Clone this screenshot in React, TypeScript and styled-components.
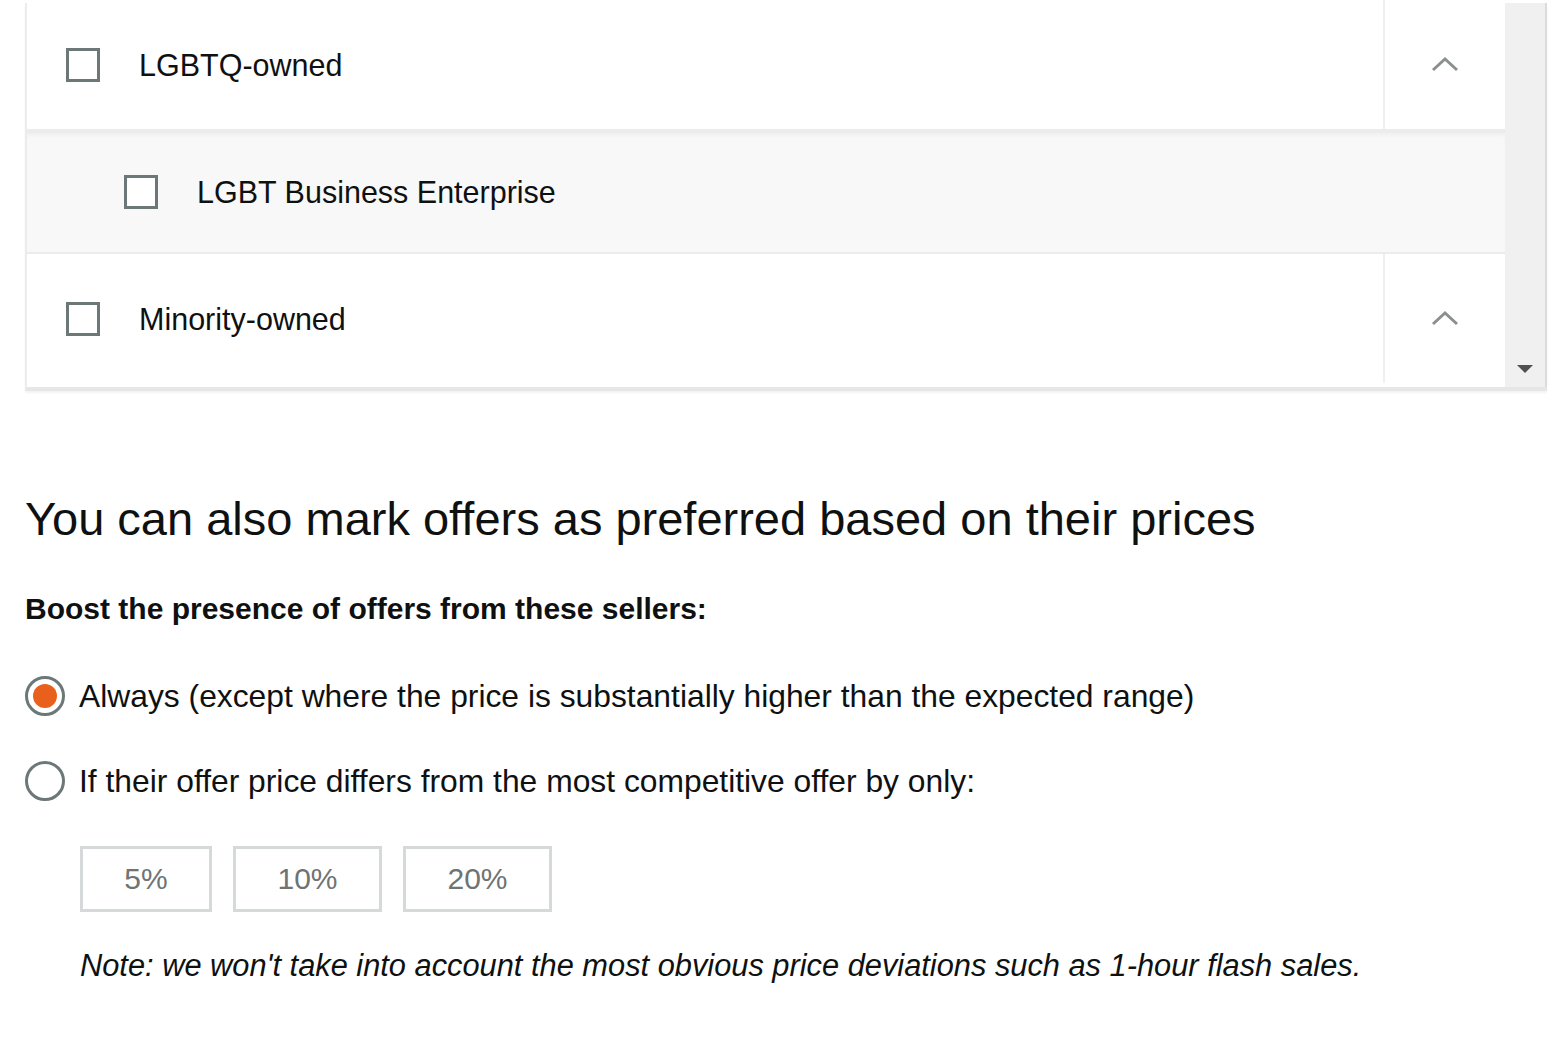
import styled, { createGlobalStyle } from "styled-components";

const GlobalStyle = createGlobalStyle`
  html, body {
    margin: 0;
    padding: 0;
    background: #fff;
  }
  body {
    font-family: "Liberation Sans", Arial, sans-serif;
    color: #0f1111;
  }
`;

interface rowData {
  label: string;
  sub?: boolean;
}

const rows: rowData[] = [
  { label: "LGBTQ-owned" },
  { label: "LGBT Business Enterprise", sub: true },
  { label: "Minority-owned" },
];

const percents = ["5%", "10%", "20%"];

const ChevronUp = () => (
  <svg width="28" height="16" viewBox="0 0 28 16">
    <path d="M2 14 L14 3 L26 14" fill="none" stroke="#8a8f8f" strokeWidth="3" />
  </svg>
);

const App = () => {
  return (
    <Page>
      <GlobalStyle />
      <ListBox>
        <ListInner>
          {rows.map((row: rowData, i: number) =>
            row.sub ? (
              <SubRow key={i}>
                <CheckBox />
                <RowLabel>{row.label}</RowLabel>
              </SubRow>
            ) : (
              <Row key={i}>
                <RowMain>
                  <CheckBox />
                  <RowLabel>{row.label}</RowLabel>
                </RowMain>
                <ToggleCell>
                  <ChevronUp />
                </ToggleCell>
              </Row>
            )
          )}
        </ListInner>
        <ScrollBar>
          <ScrollArrow />
        </ScrollBar>
      </ListBox>

      <Heading>You can also mark offers as preferred based on their prices</Heading>
      <SubHeading>Boost the presence of offers from these sellers:</SubHeading>

      <RadioRow>
        <Radio $checked />
        <RadioLabel>
          Always (except where the price is substantially higher than the expected range)
        </RadioLabel>
      </RadioRow>
      <RadioRow>
        <Radio />
        <RadioLabel>If their offer price differs from the most competitive offer by only:</RadioLabel>
      </RadioRow>

      <Percents>
        {percents.map((p: string, i: number) => (
          <PercentButton key={i} $wide={p.length > 2}>
            {p}
          </PercentButton>
        ))}
      </Percents>

      <Note>
        Note: we won't take into account the most obvious price deviations such as 1-hour
        flash sales.
      </Note>
    </Page>
  );
};

const Page = styled.div`
  padding: 0 0 40px 25px;
`;

const ListBox = styled.div`
  display: flex;
  width: 1522px;
  height: 388px;
  margin-top: 3px;
  border-left: 2px solid #ececec;
  border-bottom: 4px solid #e6e6e6;
  box-sizing: border-box;
  box-shadow: 0 2px 2px rgba(0, 0, 0, 0.05);
`;

const ListInner = styled.div`
  flex: 1;
  display: flex;
  flex-direction: column;
  margin-top: -3px;
`;

const Row = styled.div`
  display: flex;
  height: 129px;
  border-bottom: 2px solid #ececec;
  background: #fff;
  &:last-child {
    border-bottom: none;
  }
`;

const RowMain = styled.div`
  flex: 1;
  display: flex;
  align-items: center;
  padding-left: 39px;
`;

const ToggleCell = styled.div`
  width: 120px;
  border-left: 2px solid #f0f0f0;
  display: flex;
  align-items: center;
  justify-content: center;
  padding-bottom: 2px;
`;

const SubRow = styled.div`
  display: flex;
  align-items: center;
  height: 121px;
  padding-left: 97px;
  background: #f8f8f8;
  border-bottom: 2px solid #ececec;
  box-shadow: inset 0 6px 6px -4px rgba(0, 0, 0, 0.08);
`;

const CheckBox = styled.span`
  width: 34px;
  height: 34px;
  box-sizing: border-box;
  border: 3px solid #6c7778;
  background: #fff;
  flex-shrink: 0;
`;

const RowLabel = styled.span`
  margin-left: 39px;
  padding-top: 2px;
  font-size: 30.5px;
  color: #0f1111;
`;

const ScrollBar = styled.div`
  width: 42px;
  background: #f0f0f0;
  border-right: 2px solid #dcdcdc;
  box-sizing: border-box;
  display: flex;
  flex-direction: column;
  justify-content: flex-end;
  align-items: center;
  padding-bottom: 14px;
`;

const ScrollArrow = styled.span`
  width: 0;
  height: 0;
  border-left: 8px solid transparent;
  border-right: 8px solid transparent;
  border-top: 8px solid #505050;
`;

const Heading = styled.h2`
  margin: 100px 0 0;
  font-size: 47px;
  font-weight: 400;
  line-height: 56px;
  color: #0f1111;
`;

const SubHeading = styled.div`
  margin-top: 45px;
  font-size: 30px;
  font-weight: 700;
  line-height: 34px;
`;

const RadioRow = styled.div`
  display: flex;
  align-items: center;
  height: 44px;
  margin-top: 48px;
  & + & {
    margin-top: 41px;
  }
`;

const Radio = styled.span<{ $checked?: boolean }>`
  position: relative;
  width: 40px;
  height: 40px;
  box-sizing: border-box;
  border-radius: 50%;
  border: 3px solid #6c7778;
  background: #fff;
  flex-shrink: 0;
  &::after {
    content: "";
    display: ${(p) => (p.$checked ? "block" : "none")};
    position: absolute;
    inset: 5px;
    border-radius: 50%;
    background: #e8601c;
  }
`;

const RadioLabel = styled.span`
  margin-left: 14px;
  font-size: 31.8px;
`;

const Percents = styled.div`
  display: flex;
  gap: 21px;
  margin: 43px 0 0 55px;
`;

const PercentButton = styled.div<{ $wide?: boolean }>`
  width: ${(p) => (p.$wide ? "149px" : "132px")};
  height: 66px;
  box-sizing: border-box;
  border: 3px solid #d5d9d9;
  display: flex;
  align-items: center;
  justify-content: center;
  font-size: 30px;
  color: #6f7373;
`;

const Note = styled.div`
  margin: 36px 0 0 55px;
  font-size: 30.8px;
  font-style: italic;
  line-height: 36px;
`;

export default App;
